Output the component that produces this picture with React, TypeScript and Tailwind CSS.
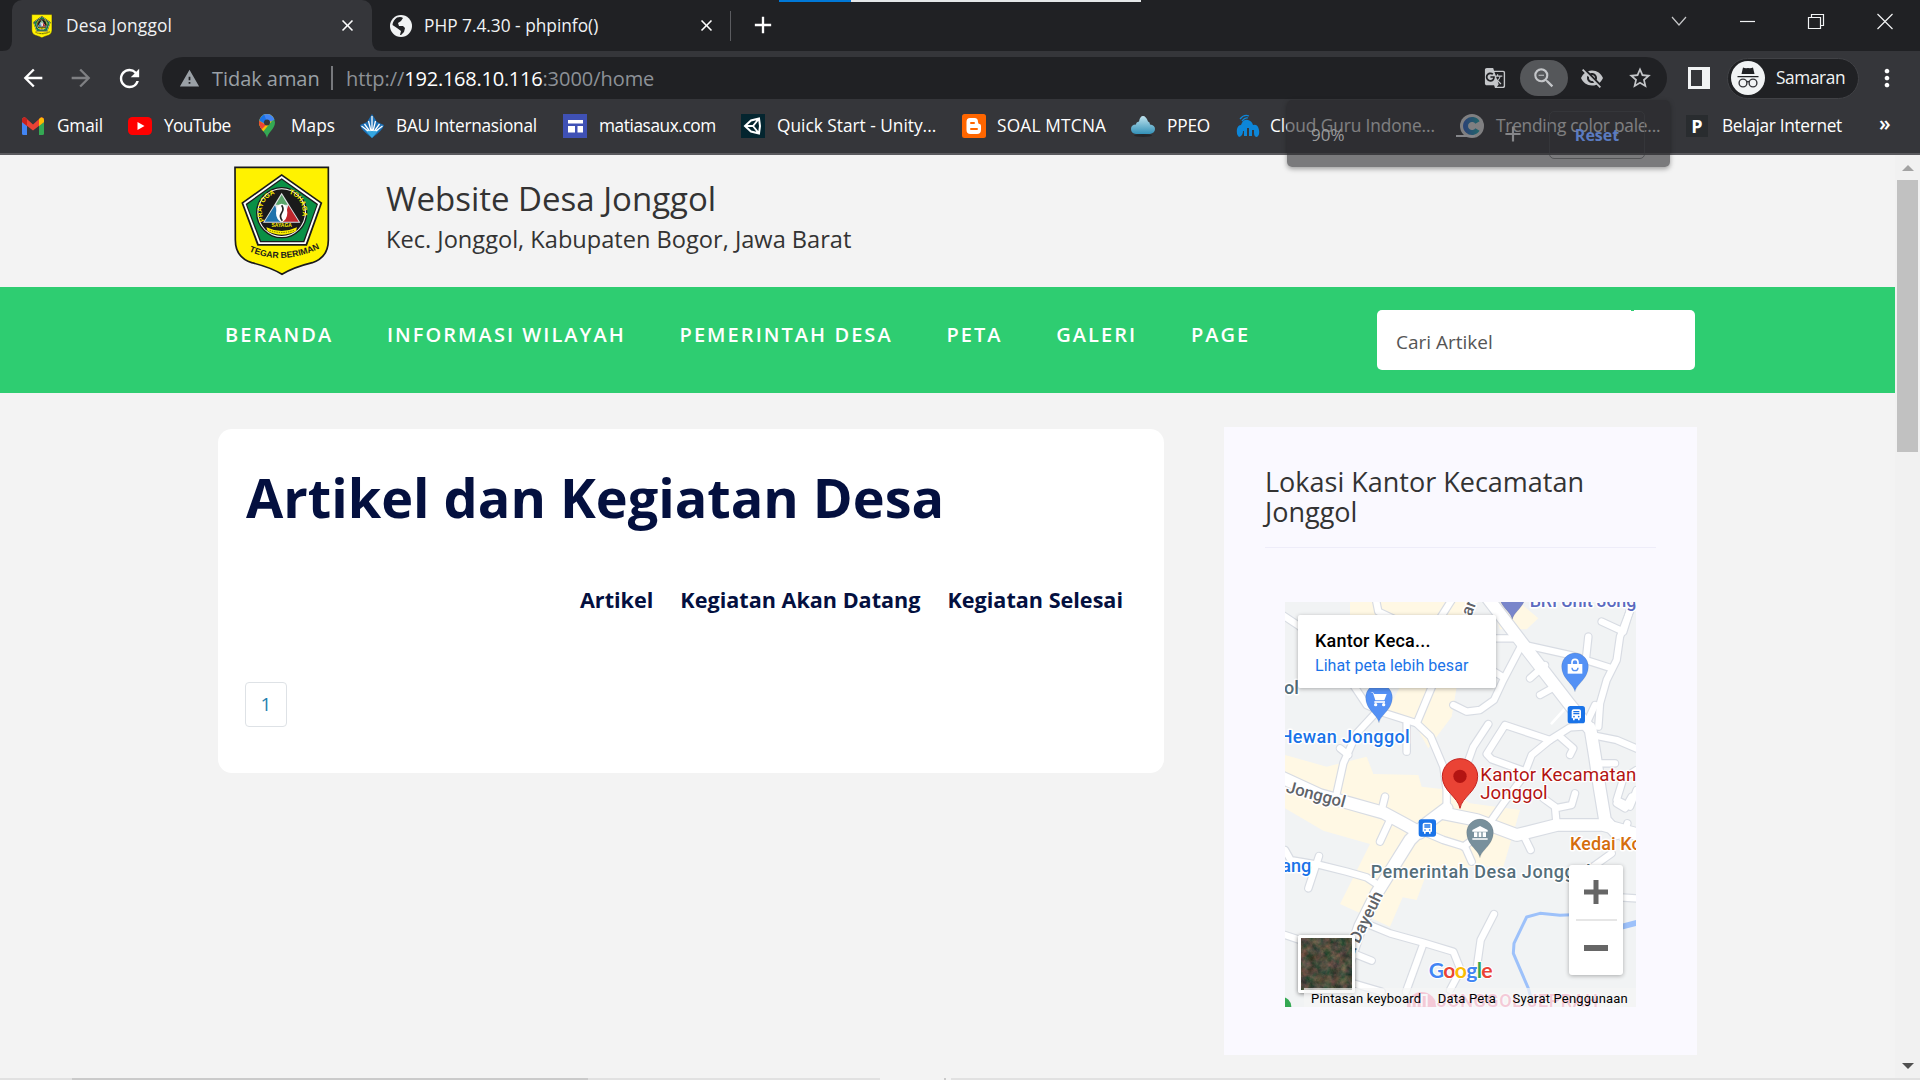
import React from "react";
import {
  MdAdd,
  MdArrowBack,
  MdArrowForward,
  MdClose,
  MdGTranslate,
  MdMoreVert,
  MdOutlineStarBorder,
  MdRefresh,
  MdVisibilityOff,
  MdWarning,
  MdZoomOut,
} from "react-icons/md";

function Crest({ className }: { className: string }) {
  return (
    <svg className={className} viewBox="0 0 345 360">
      <defs>
        <path id="motto" d="M72 274 Q172 318 282 266" />
        <path id="ringLeft" d="M119 182 A54 54 0 0 1 158 100" />
        <path id="ringRight" d="M192 101 A56 56 0 0 1 226 182" />
      </defs>
      <path
        d="M30 22H310V240Q310 292 262 308Q205 322 171 343Q137 322 80 308Q31 292 31 240Z"
        fill="#fff200"
        stroke="#1a1a1a"
        strokeWidth="5"
      />
      <path d="M170 42L292 128L246 257H97L49 128Z" fill="#1a1a1a" />
      <path d="M170 48L286 130L242 252H101L55 130Z" fill="#fff" />
      <path d="M170 55L279 132L238 247H105L62 132Z" fill="#1a1a1a" />
      <path d="M170 59L275 134L235 243H108L66 134Z" fill="#0a9046" />
      <circle cx="170" cy="158" r="77" fill="#1a1a1a" />
      <circle cx="170" cy="158" r="73" fill="#fff" />
      <circle cx="170" cy="158" r="70" fill="#1a1a1a" />
      <path d="M170 98L226 188H114Z" fill="#dfe3e6" />
      <path d="M170 104L188 134H152Z" fill="#5aa46a" />
      <path d="M150 136L166 185H119Z" fill="#1f74ad" />
      <path d="M190 136L221 185H174Z" fill="#c0272d" />
      <ellipse cx="170" cy="158" rx="17" ry="27" fill="#fff" />
      <path d="M170 136q8 12 0 22q-8 12 2 24" stroke="#222" strokeWidth="5" fill="none" />
      <text fontFamily="Liberation Sans" fontWeight="700" fontSize="20" fill="#fff200">
        <textPath href="#ringLeft">PRAYOGA</textPath>
      </text>
      <text fontFamily="Liberation Sans" fontWeight="700" fontSize="20" fill="#fff200">
        <textPath href="#ringRight">TOHAGA</textPath>
      </text>
      <text
        x="170"
        y="202"
        textAnchor="middle"
        fontFamily="Liberation Sans"
        fontWeight="700"
        fontSize="15"
        fill="#fff200"
      >
        SAYAGA
      </text>
      <path d="M124 202Q170 224 216 202L213 213Q170 236 128 213Z" fill="#fff200" />
      <path d="M134 211Q170 224 207 211" stroke="#6b6200" strokeWidth="3" strokeDasharray="4 3" fill="none" />
      <text fontFamily="Liberation Sans" fontWeight="700" fontSize="26" fill="#1a1a1a">
        <textPath href="#motto">TEGAR BERIMAN</textPath>
      </text>
    </svg>
  );
}

function Globe() {
  return (
    <svg viewBox="0 0 22 22" className="h-[22px] w-[22px]">
      <circle cx="11" cy="11" r="11" fill="#f1f3f4" />
      <path d="M7 2.500Q11 1.500 13 3L11 6L8 8L9 11H13L15 13L14 17L11 20H10L11 16L7 13L2.500 10Q3 5 7 2.500Z" fill="#202124" />
      <path d="M14 4l3 3 3 2q-1-4-4-6z" fill="#f1f3f4" />
    </svg>
  );
}

const GmailIcon = () => (
  <svg viewBox="0 0 22 18" className="h-[18px] w-[22px]">
    <path d="M0 3V16.500Q0 18 1.500 18H5V8Z" fill="#4285f4" />
    <path d="M22 3V16.500Q22 18 20.500 18H17V8Z" fill="#34a853" />
    <path d="M0 3Q0 0 3 .3L11 7.500L19 .3Q22 0 22 3V5L11 13.500L0 5Z" fill="#ea4335" />
    <path d="M17 2L19 .5Q22 0 22 3V5L17 9Z" fill="#fbbc04" />
    <path d="M5 2L3 .5Q0 0 0 3V5L5 9Z" fill="#c5221f" />
  </svg>
);
const YouTubeIcon = () => (
  <svg viewBox="0 0 24 18" className="h-[18px] w-6">
    <rect width="24" height="18" rx="4.500" fill="#f00" />
    <path d="M9.500 5L16.500 9L9.500 13Z" fill="#fff" />
  </svg>
);
const MapsIcon = () => (
  <svg viewBox="0 0 18 24" className="h-6 w-[18px]">
    <defs>
      <clipPath id="pinShape">
        <path d="M9 24C8 18 1 15 1 8.500A8 8.500 0 0 1 17 8.500C17 15 10 18 9 24Z" />
      </clipPath>
    </defs>
    <g clipPath="url(#pinShape)">
      <rect width="18" height="24" fill="#34a853" />
      <path d="M0 0H18V2L4 19L0 14Z" fill="#fbbc04" />
      <path d="M0 6L8 11L3 16L0 12Z" fill="#ea4335" />
      <path d="M4 0H18V5L9 9Z" fill="#4285f4" />
      <path d="M0 0H6L9 8L7 10L0 6Z" fill="#1a73e8" />
    </g>
    <circle cx="9" cy="8.500" r="3" fill="#35363a" />
  </svg>
);
const BauIcon = () => (
  <svg viewBox="0 0 24 24" className="h-6 w-6">
    <path d="M12 0L17 8L24 11Q23 16 12 24Q1 16 0 11L7 8Z" fill="#1c6fb5" />
    <path d="M5 16H19L12 24Z" fill="#35a7e0" />
    <path d="M12 2V17M8.500 7L11 17M15.500 7L13 17M4.500 10L9.500 17M19.500 10L14.500 17M1.500 12L8 17M22.500 12L16 17" stroke="#fff" strokeWidth="1.300" />
  </svg>
);
const MatiasIcon = () => (
  <svg viewBox="0 0 24 24" className="h-6 w-6">
    <rect width="24" height="24" fill="#3f51b5" />
    <path d="M5 6h15v3.500H5zM5 12h7v6.500H5zM14.500 12H20v6.500h-5.500z" fill="#fff" />
  </svg>
);
const UnityIcon = () => (
  <svg viewBox="0 0 24 24" className="h-6 w-6">
    <rect width="24" height="24" fill="#04252f" />
    <path d="M4 12L10 6.500L18 4.500L19 12L18 19.500L10 17.500ZM4 12H12M12 12L18 4.500M12 12L18 19.500" stroke="#fff" strokeWidth="2" fill="none" />
  </svg>
);
const BloggerIcon = () => (
  <svg viewBox="0 0 24 24" className="h-6 w-6">
    <rect width="24" height="24" rx="2.500" fill="#f60" />
    <path d="M8 4h4.500Q16 4 16 8q0 2 1.500 2t1.500 2v3.500Q19 20 15 20H8.500Q4.500 20 4.500 16V8Q4.500 4 8 4Z" fill="#fff" />
    <path d="M9 9h3M9 15h6" stroke="#f60" strokeWidth="2" strokeLinecap="round" />
  </svg>
);
const PpeoIcon = () => (
  <svg viewBox="0 0 24 24" className="h-6 w-6">
    <defs>
      <linearGradient id="cloudFill" x1="0" y1="0" x2="0" y2="1">
        <stop offset="0" stopColor="#bfe3ee" />
        <stop offset="1" stopColor="#3391b8" />
      </linearGradient>
    </defs>
    <ellipse cx="12" cy="21.500" rx="9" ry="1.500" fill="#25272b" />
    <path d="M5 20Q0 19.500 0 15T5 10.500Q5 8 8 7.500Q9 2 12 2T17 7.500Q19 8 19 10.500Q24 11 24 15T19 20Z" fill="url(#cloudFill)" />
  </svg>
);
const CloudGuruIcon = () => (
  <svg viewBox="0 0 24 24" className="h-6 w-6">
    <path d="M3 23Q0 20 1 15Q2 11 5 11Q7 5 12 6Q16 7 17 11Q22 10 23 16Q24 21 21 23Q18 23 18 19V16H16V22H13V14H11V22H8V17H7Q7 22 3 23Z" fill="#0d86d8" />
    <path d="M4 5Q8 0 13 2M6 7Q9 3 12 4" stroke="#0d86d8" strokeWidth="1.300" fill="none" />
  </svg>
);
const TrendingIcon = () => (
  <svg viewBox="0 0 24 24" className="h-6 w-6">
    <defs>
      <linearGradient id="ring" x1="0" x2="1">
        <stop offset="0" stopColor="#2b6fe0" />
        <stop offset="1" stopColor="#19b6c9" />
      </linearGradient>
    </defs>
    <circle cx="12" cy="12" r="12" fill="#fff" />
    <path d="M17.500 8.500A6.500 6.500 0 1 0 17.500 15.500" stroke="url(#ring)" strokeWidth="5" fill="none" />
  </svg>
);
const PIcon = () => (
  <span className="flex h-[22px] w-[22px] items-center justify-center bg-[#292c2f] text-[18px] font-bold text-white">P</span>
);

const bookmarks = [
  { label: "Gmail", Icon: GmailIcon, cell: "w-[106px]", icon: "w-[35px]", text: "tracking-[-0.2px]" },
  { label: "YouTube", Icon: YouTubeIcon, cell: "w-[130px]", icon: "w-[36px]", text: "tracking-[-0.65px]" },
  { label: "Maps", Icon: MapsIcon, cell: "w-[102px]", icon: "w-[33px]", text: "" },
  { label: "BAU Internasional", Icon: BauIcon, cell: "w-[203px]", icon: "w-[36px]", text: "tracking-[-0.26px]" },
  { label: "matiasaux.com", Icon: MatiasIcon, cell: "w-[178px]", icon: "w-[36px]", text: "tracking-[-0.43px]" },
  { label: "Quick Start - Unity...", Icon: UnityIcon, cell: "w-[221px]", icon: "w-[36px]", text: "" },
  { label: "SOAL MTCNA", Icon: BloggerIcon, cell: "w-[169px]", icon: "w-[35px]", text: "tracking-[0.2px]" },
  { label: "PPEO", Icon: PpeoIcon, cell: "w-[105px]", icon: "w-[36px]", text: "tracking-[-0.2px]" },
  { label: "Cloud Guru Indone...", Icon: CloudGuruIcon, cell: "w-[224px]", icon: "w-[34px]", text: "tracking-[-0.1px]" },
  { label: "Trending color pale...", Icon: TrendingIcon, cell: "w-[226px]", icon: "w-[36px]", text: "tracking-[-0.22px]" },
  { label: "Belajar Internet", Icon: PIcon, cell: "w-[193px]", icon: "w-[36px]", text: "tracking-[-0.33px]" },
];

function TabStrip() {
  return (
    <div className="flex h-[51px] bg-[#202124] pl-3 text-[17.3px] text-[#f1f3f4]">
      <div className="relative flex h-full w-[360px] items-center rounded-t-[10px] bg-[#35363a] pl-[17px]">
        <svg viewBox="0 0 10 10" className="absolute bottom-0 -left-[10px] h-[10px] w-[10px]">
          <path d="M10 0V10H0Q10 10 10 0Z" fill="#35363a" />
        </svg>
        <svg viewBox="0 0 10 10" className="absolute -right-[10px] bottom-0 h-[10px] w-[10px]">
          <path d="M0 0V10H10Q0 10 0 0Z" fill="#35363a" />
        </svg>
        <Crest className="h-[26px] w-[26px]" />
        <span className="ml-[11px] w-[272px] tracking-[0.2px]">Desa Jonggol</span>
        <MdClose size={19} className="text-white" />
      </div>
      <div className="ml-[18px] flex w-[340px] items-center">
        <Globe />
        <span className="ml-[12px] w-[273px]">PHP 7.4.30 - phpinfo()</span>
        <MdClose size={19} className="text-white" />
      </div>
      <div className="mt-[11px] h-[30px] w-px bg-[#5b5c60]" />
      <MdAdd size={28} className="mt-[11px] ml-[18px] text-white" />
      <svg viewBox="0 0 230 24" className="mt-[9px] ml-auto h-6 w-[230px]" fill="none" stroke="#f1f3f4" strokeWidth="1.200">
        <path d="M2 8L9 16L16 8" stroke="#c6c7c9" />
        <path d="M70 12.500H85" />
        <path d="M138.500 8.500H150.500V19.500H138.500ZM141.500 8V5.500H153.500V16.500H151" />
        <path d="M207.500 5L222.500 20M222.500 5L207.500 20" />
      </svg>
      <div className="w-[20px]" />
    </div>
  );
}

function Toolbar() {
  return (
    <div className="flex h-[54px] items-center bg-[#35363a] pl-[19px] text-white">
      <MdArrowBack size={28} />
      <MdArrowForward size={28} className="ml-5 text-[#7f8083]" />
      <MdRefresh size={29} className="ml-5" />
      <div className="ml-[18px] flex h-[42px] w-[1505px] items-center rounded-full bg-[#202124] pl-[17px] text-[#9aa0a6]">
        <MdWarning size={21} />
        <span className="mt-[2px] ml-3 w-[119px] shrink-0 text-[20px] tracking-[-0.05px]">Tidak aman</span>
        <span className="h-6 w-[2px] bg-[#77797d]" />
        <span className="mt-[2px] ml-[13px] text-[20px] tracking-[-0.05px] text-[#8d9197]">
          http://<span className="tracking-[-0.25px] text-white">192.168.10.116</span>:3000/home
        </span>
        <span className="ml-auto flex items-center text-[#c4c6c9]">
          <MdGTranslate size={22} />
          <span className="ml-[14px] flex h-9 w-12 items-center justify-center rounded-full bg-[#55575a]">
            <MdZoomOut size={26} />
          </span>
          <MdVisibilityOff size={24} className="ml-3" />
          <MdOutlineStarBorder size={26} className="ml-[23px]" />
        </span>
        <span className="w-[14px]" />
      </div>
      <div className="ml-[21px] h-[22px] w-[22px] border-[3px] border-r-[8px] border-[#f1f3f4]" />
      <div className="ml-[17px] flex h-[41px] w-[132px] items-center rounded-full border-[1.5px] border-[#414246] bg-[#202124] pl-[3px]">
        <svg viewBox="0 0 34 34" className="h-[34px] w-[34px]">
          <circle cx="17" cy="17" r="17" fill="#f1f3f4" />
          <path d="M12 6.500Q14 7.500 17 7Q20 7.500 22 6.500L23.500 13H10.500ZM6.500 15H27.500V16.300H6.500Z" fill="#202124" />
          <g fill="none" stroke="#35363a" strokeWidth="1.400">
            <circle cx="12" cy="22" r="3.900" />
            <circle cx="22" cy="22" r="3.900" />
            <path d="M15.500 21Q17 20 18.500 21" />
          </g>
        </svg>
        <span className="ml-[11px] text-[17.3px] tracking-[-0.4px] text-[#f1f3f4]">Samaran</span>
      </div>
      <MdMoreVert size={28} className="ml-[14px]" />
    </div>
  );
}

function BookmarksBar() {
  return (
    <div className="flex h-[50px] items-center border-b-2 border-[#5a5a5e] bg-[#35363a] pb-[6px] pl-[22px] text-[17.3px] whitespace-nowrap text-white">
      {bookmarks.map(({ label, Icon, cell, icon, text }) => (
        <div key={label} className={"flex shrink-0 items-center " + cell}>
          <span className={"shrink-0 " + icon}>
            <Icon />
          </span>
          <span className={text}>{label}</span>
        </div>
      ))}
      <span className="-mt-1 text-[21px] font-semibold">»</span>
    </div>
  );
}

function ZoomBubble() {
  return (
    <div className="absolute top-[100px] left-[1287px] flex h-[67px] w-[383px] rounded-[5px] bg-[#292a2d]/60 pt-[11px] pl-6 shadow-[0_2px_5px_rgba(0,0,0,0.35)]">
      <span className="mt-[10px] w-[145px] text-[17px] leading-7 text-[#9a9b9d]">90%</span>
      <span className="mt-[24px] h-[2px] w-[19px] bg-[#85868a]" />
      <MdAdd size={26} className="mt-[10px] ml-[25px] text-[#85868a]" />
      <span className="ml-[23px] flex h-[48px] w-[96px] items-center justify-center rounded-[5px] border border-[#3b3c40]/60 text-[16px] font-bold text-[#5b7bc0]">
        Reset
      </span>
    </div>
  );
}

const yellowAreas = [
  "M240 30H620L560 290L545 380L500 440L475 475L430 395L350 365L390 290L240 80Z",
  "M660 30H740L805 85L770 118H690Z",
  "M45 495L170 530L290 500L310 552L445 555L455 590L540 600L600 640L750 660L700 830L610 830L470 850L440 930L398 922L360 1010L210 942L300 762L160 722L45 655Z",
];

const wideRoads = [
  "M650 20L780 190L900 345L962 420L975 500L990 600L1005 690L1040 730",
  "M520 670L620 690L740 735L860 705L1000 705L1110 735",
  "M530 655L470 700L420 750L370 830L320 910L270 1010L235 1115",
  "M30 560L150 615L240 640L340 668L400 700L450 728",
];

const roads = [
  "M765 165L900 195L1025 235",
  "M1085 50L1050 140L1040 210L1010 270L990 340L985 410",
  "M955 140L948 205",
  "M995 95L1060 125L1080 60",
  "M680 145H740",
  "M755 165L700 270L672 330L630 360L590 365L550 345",
  "M700 262L655 235",
  "M825 225L780 265",
  "M790 200L845 265L855 290L810 315",
  "M655 402L610 470L585 540",
  "M965 408L900 412L840 450L785 495L760 560L700 640L665 690",
  "M840 450L705 405L650 492L665 508L760 542",
  "M870 440L910 475L900 495",
  "M965 435L1040 450L1110 480",
  "M975 345L945 410",
  "M985 520H1035M1100 540L1060 565L1040 630L1080 650L1100 600",
  "M30 70L90 110L240 270L290 345L340 368L440 400L482 440L520 530L530 600V660",
  "M325 360L260 430L220 520L200 610",
  "M410 400V485",
  "M490 280L440 400",
  "M210 475L235 495",
  "M318 30L325 65L400 100M545 30L510 85",
  "M45 780L62 810L150 825L230 845L290 862L335 892",
  "M147 798L115 895",
  "M360 690L330 755",
  "M450 720L520 750L585 770L605 815M580 770L620 740",
  "M860 705L855 650L820 625M855 655L905 645L915 610M345 620L335 660",
  "M765 745L782 780",
  "M275 995L360 1030L460 1058L550 1085L572 1140L540 1200",
  "M460 1062L408 1205",
  "M672 972L632 1050L620 1135",
  "M45 1035L120 1060",
  "M225 1080L305 1112M225 1173L335 1205",
  "M1050 922L1110 926M1072 700L1058 745M1025 790L955 840M1085 620L1065 655L1040 640",
];

function Pin({ x, y, fill, children }: { x: number; y: number; fill: string; children?: React.ReactNode }) {
  return (
    <g transform={`translate(${x} ${y})`}>
      <path d="M0 76C-5 52 -40 38 -40 0A40 40 0 1 1 40 0C40 38 5 52 0 76Z" fill={fill} stroke="#00000022" strokeWidth="2" />
      {children}
    </g>
  );
}

function BusStop({ x, y }: { x: number; y: number }) {
  return (
    <g transform={`translate(${x} ${y})`}>
      <rect x="-26" y="-26" width="52" height="52" rx="8" fill="#1a73e8" />
      <path d="M-14 -11Q-14 -16 -8 -16H8Q14 -16 14 -11V11H10V17H5V12H-5V17H-10V11H-14Z" fill="#fff" />
      <path d="M-9 -9H9M-9 -3H9" stroke="#1a73e8" strokeWidth="4" />
      <circle cx="-7" cy="6" r="2.500" fill="#1a73e8" />
      <circle cx="7" cy="6" r="2.500" fill="#1a73e8" />
    </g>
  );
}

function MapCanvas() {
  return (
    <svg viewBox="0 0 1053 1215" className="block h-[405px] w-[351px]">
      <g transform="translate(-45 -36)">
        <rect x="45" y="36" width="1053" height="1215" fill="#f1f3f4" />
        {yellowAreas.map((d) => (
          <path key={d} d={d} fill="#fff8e4" />
        ))}
        <g fill="none" strokeLinecap="round" strokeLinejoin="round">
          <path d="M905 974L870 976L810 970L770 981L732 1060L730 1090L775 1195L790 1250" stroke="#9dc1fa" strokeWidth="9" />
          <path d="M1040 1014L1110 996" stroke="#9dc1fa" strokeWidth="17" />
          <path d="M895 345L845 400" stroke="#fff" strokeWidth="8" />
          {roads.map((d) => (
            <path key={d} d={d} stroke="#d8dce3" strokeWidth="26" />
          ))}
          {wideRoads.map((d) => (
            <path key={d} d={d} stroke="#d8dce3" strokeWidth="42" />
          ))}
          {roads.map((d) => (
            <path key={d} d={d} stroke="#fff" strokeWidth="19" />
          ))}
          {wideRoads.map((d) => (
            <path key={d} d={d} stroke="#fff" strokeWidth="35" />
          ))}
        </g>
        <circle cx="35" cy="1250" r="29" fill="#34a853" />
        <circle cx="455" cy="1250" r="44" fill="#f06292" />
        <path d="M425 1250V1225H440V1250M455 1250V1215H470V1250" stroke="#fff" strokeWidth="6" fill="none" />

        <Pin x={727} y={12} fill="#7986cb" />
        <Pin x={915} y={229} fill="#5491f5">
          <path d="M-22 -7H22V22H-22Z" fill="#fff" />
          <path d="M-9 -7V-12A9 9 0 0 1 9 -12V-7" stroke="#fff" strokeWidth="5" fill="none" />
          <path d="M-9 4A9 9 0 0 0 9 4" stroke="#5491f5" strokeWidth="4" fill="none" />
        </Pin>
        <Pin x={327} y={322} fill="#5491f5">
          <path d="M-26 -15H-18L-14 -10H23L16 9H-11L-18 -13" fill="#fff" />
          <path d="M-14 14H18" stroke="#fff" strokeWidth="5" />
          <circle cx="-10" cy="22" r="5" fill="#fff" />
          <circle cx="14" cy="22" r="5" fill="#fff" />
        </Pin>
        <Pin x={630} y={727} fill="#78909c">
          <path d="M0 -19L23 -7V-2H-23V-7ZM-18 0H-8V14H-18ZM-4 0H4V14H-4ZM8 0H18V14H8ZM-23 18H23V22H-23Z" fill="#fff" />
        </Pin>
        <BusStop x={919} y={374} />
        <BusStop x={472} y={714} />
        <path
          d="M570 655C564 620 517 604 517 559A53 53 0 1 1 623 559C623 604 576 620 570 655Z"
          fill="#ea4335"
          stroke="#c5221f"
          strokeWidth="3"
        />
        <circle cx="570" cy="559" r="20" fill="#b31412" />

        <g
          fontFamily="Roboto, sans-serif"
          fontSize="54"
          fontWeight="500"
          stroke="#fff"
          strokeWidth="9"
          strokeLinejoin="round"
          paintOrder="stroke"
        >
          <text x="779" y="51" fill="#5c6bc0" textLength="350">BRI Unit Jongg</text>
          <text x="42" y="312" fill="#546e7a">ol</text>
          <text x="29" y="458" fill="#1a73e8" textLength="390">Hewan Jonggol</text>
          <g fontSize="56" fontWeight="400" strokeWidth="8">
            <text x="631" y="572" fill="#b31412" textLength="468">Kantor Kecamatan</text>
            <text x="631" y="627" fill="#b31412" textLength="202">Jonggol</text>
          </g>
          <text x="302" y="863" fill="#546e7a" textLength="660">Pemerintah Desa Jonggol</text>
          <text x="900" y="780" fill="#d56e0c" textLength="246">Kedai Kop</text>
          <text x="34" y="846" fill="#1a73e8">ang</text>
          <text x="500" y="1252" fill="#f06292" fontSize="54" textLength="484">JONGGOL JEPRAH</text>
          <g fill="#5f6368" fontSize="50">
            <text transform="translate(8 596) rotate(15)">l. Jonggol</text>
            <text transform="translate(250 1098) rotate(-64)">a Dayeuh</text>
            <text transform="translate(604 80) rotate(-70)">ara</text>
          </g>
        </g>
        <text
          x="476"
          y="1163"
          fontFamily="Lato, sans-serif"
          fontSize="64"
          fontWeight="700"
          textLength="192"
          stroke="#fff"
          strokeWidth="6"
          paintOrder="stroke"
        >
          <tspan fill="#4285f4">G</tspan>
          <tspan fill="#ea4335">o</tspan>
          <tspan fill="#fbbc04">o</tspan>
          <tspan fill="#4285f4">g</tspan>
          <tspan fill="#34a853">l</tspan>
          <tspan fill="#ea4335">e</tspan>
        </text>
      </g>
    </svg>
  );
}

function MapWidget() {
  return (
    <div className="relative ml-5 h-[405px] w-[351px] overflow-hidden font-['Roboto',sans-serif]">
      <MapCanvas />
      <div className="absolute top-[13px] left-[13px] h-[73px] w-[198px] rounded-[2px] bg-white pt-[13px] pl-[17px] shadow-[0_1px_4px_rgba(0,0,0,0.3)]">
        <div className="text-[18px] leading-[26px] font-medium tracking-[0.2px] text-black">Kantor Keca...</div>
        <div className="text-[16px] leading-[23px] tracking-[0.04px] text-[#1a73e8]">Lihat peta lebih besar</div>
      </div>
      <svg viewBox="0 0 51 52" className="absolute top-[333px] left-[13px] box-content h-[52px] w-[51px] rounded-[2px] border-[3px] border-white shadow-[0_1px_4px_rgba(0,0,0,0.5)]">
        <filter id="terrain" x="0" y="0" width="1" height="1" colorInterpolationFilters="sRGB">
          <feTurbulence type="fractalNoise" baseFrequency="0.13" numOctaves="4" seed="7" />
          <feColorMatrix values="0.6 0 0 0 0  0.25 0.2 0 0 0.07  0.25 0.1 0.1 0 0.01  0 0 0 0 1" />
        </filter>
        <rect width="51" height="52" fill="#4a4a3a" />
        <rect width="51" height="52" filter="url(#terrain)" />
      </svg>
      <div className="absolute top-[263px] right-[13px] flex h-[110px] w-[54px] flex-col items-center rounded-[3px] bg-white shadow-[0_1px_4px_rgba(0,0,0,0.3)]">
        <svg viewBox="0 0 24 24" className="mt-[15px] h-6 w-6">
          <path d="M9.500 0h5v9.500H24v5h-9.500V24h-5v-9.500H0v-5h9.500z" fill="#666" />
        </svg>
        <div className="mt-[15px] h-[2px] w-[41px] bg-[#e6e6e6]" />
        <div className="mt-[24px] h-[6px] w-6 bg-[#666]" />
      </div>
      <div className="absolute right-0 bottom-0 flex h-[19px] w-[332px] justify-between bg-[#f5f5f5]/70 pr-[8px] pl-[7px] text-[13px] leading-[22px] text-black">
        <span className="tracking-[0.2px]">Pintasan keyboard</span>
        <span className="tracking-[0.2px]">Data Peta</span>
        <span className="tracking-[0.2px]">Syarat Penggunaan</span>
      </div>
    </div>
  );
}

const menu = ["BERANDA", "INFORMASI WILAYAH", "PEMERINTAH DESA", "PETA", "GALERI", "PAGE"];

function SitePage() {
  return (
    <div className="h-full w-[1895px] bg-[#f3f3f3]">
      <header className="flex h-[132px] pt-[5px] pl-[225px] text-[#333]">
        <Crest className="h-[120px] w-[115px]" />
        <div className="mt-[19px] ml-[46px]">
          <h1 className="text-[33px] leading-10">Website Desa Jonggol</h1>
          <p className="mt-[4px] text-[23.6px] leading-8">Kec. Jonggol, Kabupaten Bogor, Jawa Barat</p>
        </div>
      </header>
      <nav className="flex h-[106px] bg-[#2ecd71] pr-[200px] pl-[225px]">
        <div className="flex gap-[53.7px] pt-[34px] text-[20px] leading-7 font-semibold tracking-[2.05px] text-white">
          {menu.map((item) => (
            <span key={item}>{item}</span>
          ))}
        </div>
        <div className="mt-[23px] ml-auto h-[60px] w-[318px] rounded-[5px] bg-white pl-[19px] text-[19px] leading-7 text-[#555]">
          <div className="ml-[235px] h-px w-[3px] bg-[#2ecd71]" />
          <div className="pt-[17px]">Cari Artikel</div>
        </div>
      </nav>
      <main className="flex items-start pl-[218px]">
        <section className="mt-[36px] h-[344px] w-[946px] rounded-[14px] bg-white pt-[38px] pr-[41px] pl-7 text-[#04103f]">
          <h2 className="text-[54px] leading-[60px] font-bold">Artikel dan Kegiatan Desa</h2>
          <div className="mt-[58px] flex justify-end gap-[27px] text-[21.6px] leading-[30px] font-bold">
            <span>Artikel</span>
            <span>Kegiatan Akan Datang</span>
            <span>Kegiatan Selesai</span>
          </div>
          <div className="mt-[67px] -ml-px flex h-[45px] w-[42px] items-center justify-center rounded-[4px] border border-[#dee2e6] text-[19px] text-[#1f7fb0]">
            1
          </div>
        </section>
        <aside className="mt-[34px] ml-[60px] h-[628px] w-[473px] bg-[#faf9ff] pt-[40px] pr-[41px] pl-[41px] text-[#333]">
          <h3 className="text-[27px] leading-[30px]">
            Lokasi Kantor Kecamatan
            <br />
            Jonggol
          </h3>
          <div className="mt-[20px] mb-[54px] h-px bg-[#eeedf9]" />
          <MapWidget />
        </aside>
      </main>
    </div>
  );
}

function Scrollbar() {
  return (
    <div className="flex h-full w-[25px] flex-col items-center bg-[#f1f1f1]">
      <svg viewBox="0 0 12 6" className="mt-[10px] h-[6px] w-3">
        <path d="M6 0L12 6H0Z" fill="#a3a3a3" />
      </svg>
      <div className="mt-[9px] h-[272px] w-[21px] bg-[#c1c1c1]" />
      <svg viewBox="0 0 12 6" className="mt-auto mb-[9px] h-[6px] w-3">
        <path d="M6 6L12 0H0Z" fill="#505050" />
      </svg>
    </div>
  );
}

export default function App() {
  return (
    <div className="relative flex h-[1080px] w-[1920px] flex-col overflow-hidden font-['Open_Sans','Noto_Sans',sans-serif]">
      <TabStrip />
      <Toolbar />
      <BookmarksBar />
      <div className="flex h-[923px]">
        <SitePage />
        <Scrollbar />
      </div>
      <div className="flex h-[2px] bg-[#f3f3f3]">
        <div className="w-[72px] bg-[#e1e1e1]" />
        <div className="w-[516px] bg-[#cacaca]" />
        <div className="w-[292px] bg-[#e1e1e1]" />
        <div className="ml-[64px] w-[2px] bg-[#cacaca]" />
        <div className="ml-[5px] grow bg-[#e1e1e1]" />
      </div>
      <div className="absolute top-0 left-[779px] flex h-[2px]">
        <div className="w-[72px] bg-[#0078d7]" />
        <div className="w-[290px] bg-[#e4e7e8]" />
      </div>
      <ZoomBubble />
    </div>
  );
}
